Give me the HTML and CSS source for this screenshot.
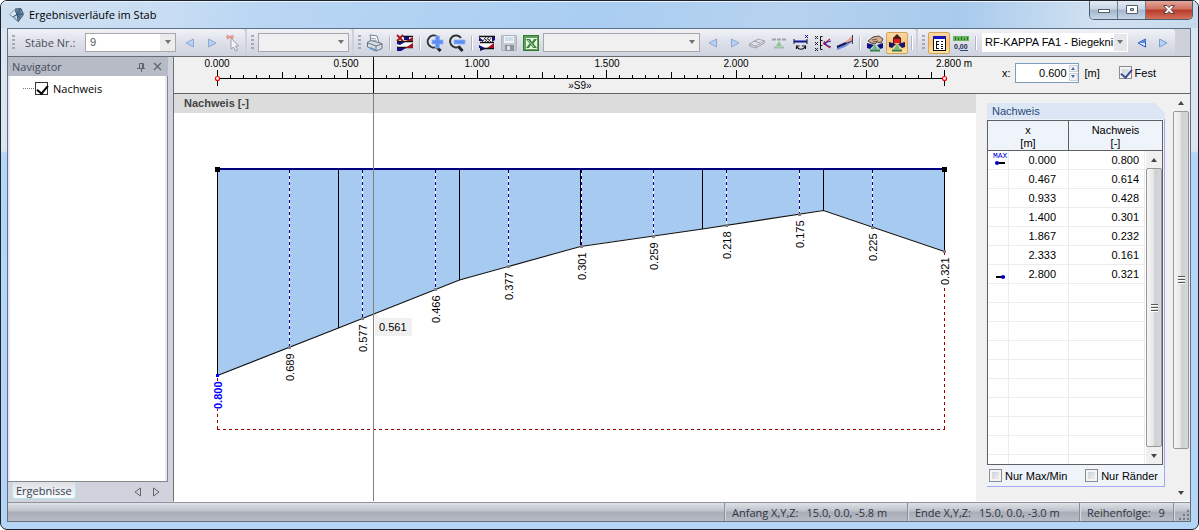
FILE: index.html
```html
<!DOCTYPE html>
<html lang="de">
<head>
<meta charset="utf-8">
<title>Ergebnisverläufe im Stab</title>
<link rel="stylesheet" href="styles.css">
</head>
<body>
<div class="window">
  <header class="titlebar">
    <svg class="app-icon" width="16" height="16" viewBox="0 0 16 16"><path d="M0 7.500L6 2l6-.5 2.500 6L9 15z" fill="#7f99b3"/><path d="M6.500 2.500L11 2l2 5-3 6-2-6z" fill="#5c7c9b"/><path d="M1 7.500L6 3l1.500 4L4.500 9.500zM5.500 10L8 8l1 5z" fill="#dce8f2"/><path d="M6 2l6-.5 2.500 6L9 15M6 3l2 4.500L9 14M8 7.500l6-.5M8 7.500L11.500 2M4.500 9.500L8 7.500l3 4" fill="none" stroke="#34506c" stroke-width=".9"/></svg>
    <h1 class="title">Ergebnisverläufe im Stab</h1>
    <div class="window-buttons">
      <button class="win-btn" aria-label="Minimieren"><svg width="14" height="12" viewBox="0 0 14 12"><rect x="1.500" y="5.500" width="11" height="3" fill="#fff" stroke="#555e6c"/></svg></button>
      <button class="win-btn" aria-label="Maximieren"><svg width="14" height="12" viewBox="0 0 14 12"><path d="M1.500 1.500h11v8h-11zM5.500 4.500v2h3v-2z" fill="#fff" fill-rule="evenodd" stroke="#555e6c"/></svg></button>
      <button class="win-btn close" aria-label="Schließen"><svg width="14" height="12" viewBox="0 0 14 12"><path d="M1.500 1.500H5L7 3.500l2-2h3.500L9 5.500l3.500 4H9l-2-2-2 2H1.500l3.500-4z" fill="#fff" stroke="#5a4044"/></svg></button>
    </div>
  </header>

  <div class="client">
    <div class="toolbar">
      <div class="tool-group">
        <span class="grip"></span>
        <label class="tool-label" for="staebe">Stäbe Nr.:</label>
        <span class="combo members"><select id="staebe"><option>9</option></select></span>
        <button class="tool" aria-label="Vorheriger Stab"><svg width="18" height="18" viewBox="0 0 18 18"><path d="M12.500 5v8L5 9z" fill="#b9d0f2" stroke="#8aaad8"/></svg></button>
        <button class="tool" aria-label="Nächster Stab"><svg width="18" height="18" viewBox="0 0 18 18"><path d="M5.500 5v8L13 9z" fill="#b9d0f2" stroke="#8aaad8"/></svg></button>
        <button class="tool" aria-label="Stab wählen"><svg width="18" height="18" viewBox="0 0 18 18"><path d="M6 4v11l2.500-2 2 4 2-1-2-4h3z" fill="#f3f4f6" stroke="#9a9ea8"/><path d="M2 1l6 4M8 1L2 5M1 3h8" stroke="#e09a8c" stroke-width="1.500"/></svg></button>
      </div>
      <div class="tool-group">
        <span class="grip"></span>
        <span class="combo empty"><select aria-label="Ergebnisgruppe"><option></option></select></span>
      </div>
      <div class="tool-group">
        <span class="grip"></span>
        <button class="tool" aria-label="Drucken"><svg width="18" height="18" viewBox="0 0 18 18"><path d="M4 1l7 1 2 7-8-1z" fill="#fff" stroke="#777e89"/><path d="M1.500 8L5 6.500l11 3v5L10 17l-8.500-4z" fill="#d8dce3" stroke="#6c737f"/><path d="M2 9l8 3 6-2M10 12v5" fill="none" stroke="#6c737f"/><path d="M4 14l5 2" stroke="#5f9bd0" stroke-width="2"/><path d="M5 4l5 1M6 6l5 1" stroke="#8ba6c4"/></svg></button>
        <span class="sep"></span>
        <button class="tool" aria-label="Verläufe löschen"><svg width="18" height="18" viewBox="0 0 18 18"><path d="M7 2h10v6H1V7zM2 8h14v5H2z" fill="#fff"/><path d="M7 2.500h10M1 7.500h16M1 13.500h16" stroke="#111" stroke-width="1.300"/><path d="M17 3v4h-7z" fill="#a01020"/><path d="M1 8h8l-5 3-3-1z" fill="#101080"/><path d="M17 9v5h-8z" fill="#a01020"/><path d="M1 14h9l-5 3H1z" fill="#101080"/><path d="M8 3h5v3H8z" fill="#101080"/><path d="M1 1l6 6M7 1L1 7" stroke="#a81010" stroke-width="1.800"/></svg></button>
        <span class="sep"></span>
        <button class="tool" aria-label="Vergrößern"><svg width="18" height="18" viewBox="0 0 18 18"><path d="M10 12l4.500 5" stroke="#222" stroke-width="3"/><path d="M11 2.500A6 6 0 1 0 11 12.500" fill="#dfe8f4" stroke="#333" stroke-width="2"/><path d="M9.500 2h4v4H17v4h-3.500v4h-4v-4H6V6h3.500z" fill="#5f8ef0" stroke="#8fb0f5" stroke-width=".8"/></svg></button>
        <button class="tool" aria-label="Verkleinern"><svg width="18" height="18" viewBox="0 0 18 18"><path d="M10 12l4.500 5" stroke="#222" stroke-width="3"/><path d="M13 4A6 6 0 1 0 12 12" fill="#dfe8f4" stroke="#333" stroke-width="2"/><path d="M6 6h11v4H6z" fill="#5f8ef0" stroke="#8fb0f5" stroke-width=".8"/></svg></button>
        <span class="sep"></span>
        <button class="tool" aria-label="Bereiche"><svg width="18" height="18" viewBox="0 0 18 18"><path d="M2 2h14v12H2z" fill="#fff"/><path d="M1 2.500h16M2 8.500h14M2 14.500h14" stroke="#111" stroke-width="1.300"/><path d="M1 3l5 4H1zM17 3v3l-3 2V3z" fill="#101080"/><path d="M4 8l4-5M7 8l4-5M10 8l3-4M6 4l4 4M9 4l4 4" stroke="#444"/><path d="M16 9v5h-7z" fill="#a01020"/><path d="M1 11l6 3H1zM7 15l-5 2v-2z" fill="#101080"/></svg></button>
        <button class="tool" aria-label="Speichern"><svg width="18" height="18" viewBox="0 0 18 18"><rect x="1.500" y="1.500" width="15" height="15" rx="1" fill="#c3c8d1" stroke="#adb3bd"/><path d="M4 2h10v7H4z" fill="#f0f4f8"/><path d="M5 4h8M5 6h8" stroke="#aec6e0"/><path d="M5 11h9v6H5z" fill="#8d939d"/><path d="M7 12h3v4H7z" fill="#dfe3e9"/></svg></button>
        <button class="tool" aria-label="Excel-Export"><svg width="18" height="18" viewBox="0 0 18 18"><rect x="1.500" y="1.500" width="15" height="15" fill="#5da256" stroke="#2f7a2d"/><path d="M4 4h11v11H4z" fill="#eef6ea"/><path d="M4 5h4l2 3 2-3h3l-3.500 4.500L15 14h-4l-2-3-2 3H4l3.500-4.500z" fill="#3a8442"/><path d="M6 6l6 7" stroke="#b9dcb0"/></svg></button>
        <span class="combo wide"><select aria-label="Diagramm"><option></option></select></span>
        <button class="tool" aria-label="Zurück"><svg width="18" height="18" viewBox="0 0 18 18"><path d="M12.500 5v8L5 9z" fill="#b9d0f2" stroke="#8aaad8"/></svg></button>
        <button class="tool" aria-label="Weiter"><svg width="18" height="18" viewBox="0 0 18 18"><path d="M5.500 5v8L13 9z" fill="#b9d0f2" stroke="#8aaad8"/></svg></button>
        <button class="tool" aria-label="Löschen"><svg width="18" height="18" viewBox="0 0 18 18"><path d="M1.500 10L10 5l6.500 2L8 12z" fill="#e2e3e6" stroke="#a2a5ab"/><path d="M1.500 10v2L8 14l8.500-5V7M8 12v2M6 7l6 2" fill="none" stroke="#a2a5ab"/></svg></button>
        <button class="tool" aria-label="Lager"><svg width="18" height="18" viewBox="0 0 18 18"><path d="M2 5.500h14" stroke="#a0a3a8" stroke-width="2" stroke-dasharray="4 1"/><path d="M9 7l3 5H6z" fill="#8cc49a"/><path d="M4 13.500h10" stroke="#9fc0a6" stroke-width="2"/></svg></button>
        <button class="tool" aria-label="Glättung"><svg width="18" height="18" viewBox="0 0 18 18"><path d="M2 5v5M15 5v5" stroke="#111"/><path d="M2 7.500h13" stroke="#14148c" stroke-width="2"/><path d="M13 1l3 3M16 1l-3 3" stroke="#1414a0"/><path d="M5 13c2 3 6 3 8 0M4.500 15v-3h3M10 12h3.500v3" fill="none" stroke="#111" stroke-width="1.200"/></svg></button>
        <button class="tool" aria-label="Werte"><svg width="18" height="18" viewBox="0 0 18 18"><path d="M1 2l3 3M4 2L1 5M1 8l3 3M4 8l-3 3M1 14l3 3M4 14l-3 3" stroke="#222"/><path d="M8.500 2.500h-2v13h2M6.500 6.500h2M6.500 11.500h2" fill="none" stroke="#111"/><path d="M9 9h2l5-4M9 9l7 5" fill="none" stroke="#d02020" stroke-width="1.200"/><path d="M10 11c2-3 4-3 7-4M10 7c2 4 4 5 7 6" fill="none" stroke="#1414c0"/></svg></button>
        <button class="tool" aria-label="Verlauf"><svg width="18" height="18" viewBox="0 0 18 18"><path d="M9 8l7-6v6l-7 2z" fill="#e9a79b"/><path d="M1 12l8-3 7-1-7 5-8 3z" fill="#6c86e0"/><path d="M1 13l15-6M16.500 1v9" stroke="#3c3c55"/><path d="M1 13l9-4" stroke="#161f55" stroke-width="2"/></svg></button>
        <span class="sep"></span>
        <button class="tool" aria-label="Lager anzeigen"><svg width="18" height="18" viewBox="0 0 18 18"><path d="M1 9l7 2-4 4-3-1zM17 9l-6 2 3 4 3-1z" fill="#12127a"/><path d="M2 7l5-4 6-1 4 3-2 4-4-1-2 2-4-1z" fill="#d1ae91" stroke="#55453d"/><path d="M6 6l5-1M7 8l5-1" stroke="#6e5649"/><path d="M9 10l3 5H6z" fill="#5fc080"/><path d="M4 16.500h10" stroke="#317d4a" stroke-width="2"/></svg></button>
        <button class="tool active" aria-label="Auflager"><svg width="18" height="18" viewBox="0 0 18 18"><path d="M1 8l7 2-4 4-3-1zM17 8l-7 2 4 4 3-1z" fill="#14146a"/><path d="M6 4h6v5H6z" fill="#e0201c"/><path d="M9 0l4 4v6h-1V5H6v5H5V4z" fill="#4c1d18"/><path d="M9 10l3 5H6z" fill="#5fc080"/><path d="M4 16.500h10" stroke="#317d4a" stroke-width="2"/></svg></button>
        <span class="sep"></span>
      </div>
      <div class="tool-group">
        <span class="grip"></span>
        <button class="tool active" aria-label="Navigator"><svg width="18" height="18" viewBox="0 0 18 18"><rect x="3.500" y="2.500" width="12" height="14" fill="#fff" stroke="#111"/><path d="M3 2h13v3H3z" fill="#1515b8"/><path d="M6.500 7v8M6 7.500h3M6 10.500h3M6 14.500h3M11 7.500h2M11 10.500h2M11 12.500h2M11 14.500h2" stroke="#111"/></svg></button>
        <button class="tool" aria-label="Wertetabelle"><svg width="18" height="18" viewBox="0 0 18 18"><path d="M1 2h16v5H1z" fill="#67b45b"/><path d="M3.500 3v3M6.500 4v2M9.500 3v3M12.500 4v2M15.500 3v3" stroke="#226e2b"/><text class="icon-digits" x="2" y="15">0,00</text><path d="M8 16.500h8" stroke="#2e4585"/></svg></button>
        <span class="sep"></span>
        <span class="combo case"><select aria-label="Bemessungsfall"><option>RF-KAPPA FA1 - Biegekni</option></select></span>
        <button class="tool" aria-label="Vorheriger Fall"><svg width="18" height="18" viewBox="0 0 18 18"><path d="M12.500 5v8L5 9z" fill="#dce9fb" stroke="#2c58c4"/><path d="M12.500 5v4H5z" fill="#5c88dc"/></svg></button>
        <button class="tool" aria-label="Nächster Fall"><svg width="18" height="18" viewBox="0 0 18 18"><path d="M4.500 5v8L12 9z" fill="#b9d0f2" stroke="#7a9fd8"/></svg></button>
      </div>
    </div>

    <div class="workspace">
      <aside class="navigator">
        <div class="nav-header">
          <span class="nav-title">Navigator</span>
          <button class="plain" aria-label="Anheften"><svg width="10" height="10" viewBox="0 0 10 10"><path d="M3.500 6V1.500h4V6M1 6.500h8M5.500 7v3M6.500 2v4" fill="none" stroke="#5e6571"/></svg></button>
          <button class="plain" aria-label="Navigator schließen"><svg width="10" height="10" viewBox="0 0 10 10"><path d="M1 1l7 7M8 1L1 8" stroke="#5e6571" stroke-width="1.300"/></svg></button>
        </div>
        <div class="tree">
          <label class="tree-item"><span class="branch"></span><input class="check tree-check" type="checkbox" checked>Nachweis</label>
        </div>
        <div class="nav-tabs">
          <button class="nav-tab">Ergebnisse</button>
          <button class="plain" aria-label="Nach links"><svg width="8" height="10" viewBox="0 0 8 10"><path d="M6.500 1v8L1 5z" fill="none" stroke="#666"/></svg></button>
          <button class="plain" aria-label="Nach rechts"><svg width="8" height="10" viewBox="0 0 8 10"><path d="M1.500 1v8L7 5z" fill="none" stroke="#666"/></svg></button>
        </div>
      </aside>

      <main class="main">
        <div class="ruler">
          <svg class="ruler-scale" viewBox="0 0 802 36" preserveAspectRatio="xMinYMin meet" shape-rendering="crispEdges">
            <path d="M43 21.500h727" stroke="#000"/>
            <path d="M56.500 18v3M69.500 18v3M82.500 18v3M95.500 18v3M121.500 18v3M134.500 18v3M147.500 18v3M160.500 18v3M186.500 18v3M199.500 18v3M212.500 18v3M225.500 18v3M251.500 18v3M264.500 18v3M277.500 18v3M290.500 18v3M316.500 18v3M329.500 18v3M342.500 18v3M355.500 18v3M380.500 18v3M393.500 18v3M406.500 18v3M419.500 18v3M445.500 18v3M458.500 18v3M471.500 18v3M484.500 18v3M510.500 18v3M523.500 18v3M536.500 18v3M549.500 18v3M575.500 18v3M588.500 18v3M601.500 18v3M614.500 18v3M640.500 18v3M653.500 18v3M666.500 18v3M679.500 18v3M705.500 18v3M718.500 18v3M731.500 18v3M744.500 18v3" stroke="#000"/>
            <path d="M108.500 15v6M238.500 15v6M368.500 15v6M497.500 15v6M627.500 15v6M757.500 15v6" stroke="#000"/>
            <path d="M173.500 13v8M303.500 13v8M432.500 13v8M562.500 13v8M692.500 13v8M43.500 13v16M770.500 13v16M199.500 0v36" stroke="#000"/>
            <g fill="#fff" stroke="#f00" stroke-width="1.200" shape-rendering="auto"><circle cx="43.500" cy="21.500" r="2"/><circle cx="770.500" cy="21.500" r="2"/></g>
            <g class="scale-text" text-anchor="middle">
              <text x="43" y="10">0.000</text><text x="172" y="10">0.500</text><text x="303" y="10">1.000</text><text x="433" y="10">1.500</text><text x="562" y="10">2.000</text><text x="692" y="10">2.500</text><text x="780" y="10">2.800 m</text><text x="406" y="32">»S9»</text>
            </g>
          </svg>
        </div>
        <form class="position">
          <label for="pos-x">x:</label>
          <span class="spin"><input id="pos-x" type="text" value="0.600"><span class="spin-arrows"><button type="button" aria-label="Erhöhen"><i class="tri up"></i></button><button type="button" aria-label="Verringern"><i class="tri down"></i></button></span></span>
          <span class="unit">[m]</span>
          <label class="fixed"><input class="check" type="checkbox" checked>Fest</label>
        </form>

        <section class="diagram">
          <h2 class="diagram-title">Nachweis [-]</h2>
          <svg class="plot" viewBox="174 113 802 387" preserveAspectRatio="xMinYMin meet">
            <path d="M217.500 169V376L338.500 328L459.500 280L580.500 246L702.500 229L823.500 210L944.500 251V169z" fill="#a6caf0"/>
            <g fill="none" shape-rendering="crispEdges">
              <path d="M289.500 170v177M362.500 170v148M435.500 170v119M508.500 170v96M581.500 170v76M653.500 170v66M726.500 170v55M799.500 170v44M872.500 170v57" stroke="#fff"/>
              <path d="M289.500 170v177M362.500 170v148M435.500 170v119M508.500 170v96M581.500 170v76M653.500 170v66M726.500 170v55M799.500 170v44M872.500 170v57" stroke="#00007f" stroke-dasharray="3 3"/>
              <path d="M217.500 169v207M338.500 169v159M459.500 169v111M580.500 169v77M702.500 169v60M823.500 169v41M944.500 169v82" stroke="#000"/>
              <path d="M217.500 378v52" stroke="#a00000" stroke-dasharray="3 3"/>
              <path d="M217 429.500h728M944.500 429V253" stroke="#a00000" stroke-dasharray="3 3"/>
              <path d="M217 169h728" stroke="#00007f" stroke-width="2"/>
            </g>
            <path d="M217.500 375.500L338.500 328L459.500 280L580.500 246.500L702.500 229L823.500 210.500L944.500 251.500" fill="none" stroke="#111" stroke-width="1.100"/>
            <g shape-rendering="crispEdges">
              <path d="M215 167h5v5h-5zM942 167h5v5h-5z"/>
              <path d="M288 346h3v3h-3zM361 317h3v3h-3zM434 288h3v3h-3zM507 265h3v3h-3zM580 245h3v3h-3zM652 235h3v3h-3zM725 224h3v3h-3zM798 213h3v3h-3zM871 226h3v3h-3zM943 250h3v3h-3z" fill="#808080"/>
              <path d="M216 374h3v3h-3z" fill="#00f"/>
              <path d="M213 381h10v28h-10zM940 258h10v27h-10z" fill="#fff"/>
              <path d="M373.500 113v388" stroke="#808080"/>
              <path d="M375 318h37v18h-37zM375 314l4 4h-4z" fill="#f0f0f0"/>
            </g>
            <g class="plot-text">
              <text class="max" transform="translate(222 409) rotate(-90)">0.800</text>
              <text transform="translate(294 381) rotate(-90)">0.689</text>
              <text transform="translate(367 352) rotate(-90)">0.577</text>
              <text transform="translate(440 323) rotate(-90)">0.466</text>
              <text transform="translate(513 300) rotate(-90)">0.377</text>
              <text transform="translate(586 280) rotate(-90)">0.301</text>
              <text transform="translate(658 270) rotate(-90)">0.259</text>
              <text transform="translate(731 259) rotate(-90)">0.218</text>
              <text transform="translate(804 248) rotate(-90)">0.175</text>
              <text transform="translate(877 261) rotate(-90)">0.225</text>
              <text transform="translate(949 285) rotate(-90)">0.321</text>
              <text x="379" y="331">0.561</text>
            </g>
          </svg>
        </section>

        <aside class="side">
          <section class="panel">
            <h2 class="panel-title">Nachweis</h2>
            <div class="panel-body">
              <div class="grid-frame">
                <table class="values">
                  <colgroup><col class="c-mark"><col class="c-x"><col class="c-val"><col class="c-bar"></colgroup>
                  <thead><tr><th colspan="2">x<br>[m]</th><th colspan="2">Nachweis<br>[-]</th></tr></thead>
                  <tbody>
                    <tr><td><svg class="mark" width="16" height="17" viewBox="0 0 16 17"><text class="max-mark" x="0" y="6">MAX</text><path d="M3 11h9" stroke="#000" stroke-width="2"/><circle cx="4" cy="11" r="2" fill="#0000d0"/></svg></td><td>0.000</td><td>0.800</td><td></td></tr>
                    <tr><td></td><td>0.467</td><td>0.614</td><td></td></tr>
                    <tr><td></td><td>0.933</td><td>0.428</td><td></td></tr>
                    <tr><td></td><td>1.400</td><td>0.301</td><td></td></tr>
                    <tr><td></td><td>1.867</td><td>0.232</td><td></td></tr>
                    <tr><td></td><td>2.333</td><td>0.161</td><td></td></tr>
                    <tr><td><svg class="mark" width="16" height="17" viewBox="0 0 16 17"><path d="M3 11h9" stroke="#000" stroke-width="2"/><circle cx="10" cy="11" r="2" fill="#0000d0"/></svg></td><td>2.800</td><td>0.321</td><td></td></tr>
                    <tr><td></td><td></td><td></td><td></td></tr>
                    <tr><td></td><td></td><td></td><td></td></tr>
                    <tr><td></td><td></td><td></td><td></td></tr>
                    <tr><td></td><td></td><td></td><td></td></tr>
                    <tr><td></td><td></td><td></td><td></td></tr>
                    <tr><td></td><td></td><td></td><td></td></tr>
                    <tr><td></td><td></td><td></td><td></td></tr>
                    <tr><td></td><td></td><td></td><td></td></tr>
                    <tr><td></td><td></td><td></td><td></td></tr>
                    <tr><td></td><td></td><td></td><td></td></tr>
                  </tbody>
                </table>
                <div class="scrollbar inner"><button aria-label="Nach oben"><i class="tri up"></i></button><div class="thumb"><i></i><i></i><i></i></div><button aria-label="Nach unten"><i class="tri down"></i></button></div>
              </div>
              <div class="filters">
                <label><input class="check" type="checkbox">Nur Max/Min</label>
                <label><input class="check" type="checkbox">Nur Ränder</label>
              </div>
            </div>
          </section>
          <div class="scrollbar outer"><button aria-label="Nach oben"><i class="tri up"></i></button><div class="thumb"><i></i><i></i><i></i></div><div class="track"></div><button aria-label="Nach unten"><i class="tri down"></i></button></div>
        </aside>
      </main>
    </div>

    <footer class="status">
      <div class="cell start"><span>Anfang X,Y,Z:</span><span>15.0, 0.0, -5.8 m</span></div>
      <div class="cell end"><span>Ende X,Y,Z:</span><span>15.0, 0.0, -3.0 m</span></div>
      <div class="cell order"><span>Reihenfolge:</span><span>9</span></div>
      <div class="cell size-grip"><svg width="12" height="12" viewBox="0 0 12 12"><path d="M9 1h2v2H9zM5 5h2v2H5zM9 5h2v2H9zM1 9h2v2H1zM5 9h2v2H5zM9 9h2v2H9z" fill="#757b85"/></svg></div>
    </footer>
  </div>
</div>
</body>
</html>
```
FILE: styles.css
```css
* { box-sizing: border-box; }

body {
  margin: 0;
  background: #fff;
  color: #000;
  font-family: "Open Sans", "Noto Sans", sans-serif;
  font-size: 11px;
}

button {
  margin: 0;
  padding: 0;
  border: 0;
  background: none;
  color: inherit;
  font: inherit;
}

h1, h2 { margin: 0; font-weight: normal; }

/* Window frame */
.window {
  display: flex;
  flex-direction: column;
  height: 100vh;
  min-height: 500px;
  padding: 0 7px 7px 6px;
  border: 1px solid #1c232d;
  border-radius: 7px;
  background: linear-gradient(#d9e6f3 28px, #dbe5ee 150px, #b3d6f9 152px, #b5d5f5);
  overflow: hidden;
}

.titlebar {
  display: flex;
  align-items: flex-start;
  flex: none;
  height: 27px;
  margin: 0 -7px 0 -6px;
  padding: 0 5px 0 8px;
  background: linear-gradient(100deg, #cfe0f1, #c8ddf3 14%, #b9d6f3 22%, #a9cdf1 50%, #b6d2ef 65%, #a8caec 80%, #d3e2f1 92%, #c6d9ec);
  box-shadow: inset 0 1px #eaf4fe;
}

.app-icon { margin-top: 6px; }

.title {
  flex: 1;
  margin-left: 4px;
  font-size: 11px;
  line-height: 28px;
}

.window-buttons {
  display: flex;
  border: 1px solid #4e5c70;
  border-top: 0;
  border-radius: 0 0 5px 5px;
  overflow: hidden;
}

.win-btn {
  display: flex;
  align-items: center;
  justify-content: center;
  width: 28px;
  height: 18px;
  border-right: 1px solid #6a7c92;
  background: linear-gradient(#e3ebf4, #c7d4e3 45%, #a4b6ca 50%, #c5d6e8);
}

.win-btn.close {
  width: 46px;
  border-right: 0;
  background: linear-gradient(#e3a69b, #cf7160 45%, #b53a28 50%, #d4705a);
}

.client {
  display: flex;
  flex-direction: column;
  flex: 1;
  min-height: 0;
  border: 1px solid #66717f;
  border-top-color: #5b6f87;
  background: #d0d3dd;
}

/* Toolbar */
.toolbar {
  display: flex;
  flex: none;
  gap: 2px;
  height: 28px;
  border-bottom: 1px solid #686b71;
  background: #ced1d9;
}

.tool-group {
  display: flex;
  align-items: center;
  flex: none;
  padding-left: 4px;
  border-radius: 0 3px 3px 0;
  background: linear-gradient(#f0f2f7, #dde0e9 50%, #cfd3de);
}

.grip {
  flex: none;
  width: 3px;
  height: 15px;
  margin-right: 3px;
  background: repeating-linear-gradient(#a5aab5 0 2px, transparent 2px 4px);
}

.tool-label { width: 60px; margin-left: 7px; color: #4a4e58; }

.combo {
  position: relative;
  flex: none;
  height: 19px;
  border: 1px solid #a6a8ae;
  background: #f0f0f0;
}

.combo::after {
  content: "";
  position: absolute;
  top: 6px;
  right: 4px;
  border: 3px solid transparent;
  border-top: 4px solid #6f7277;
  border-bottom: 0;
  pointer-events: none;
}

.combo select {
  width: 100%;
  height: 100%;
  padding: 0 14px 0 4px;
  border: 0;
  appearance: none;
  background: transparent;
  color: #000;
  font: 11px/17px "Liberation Sans", Arial, sans-serif;
}

.members { width: 91px; margin-right: 3px; background: linear-gradient(90deg, #fff 74px, #ececec 74px); }
.members select { color: #555; }
.empty { width: 91px; margin: 0 3px 0 1px; }
.wide { width: 157px; margin: 0 2px 0 1px; }
.case { width: 146px; margin: 0 3px 0 2px; border-color: #fff; background: linear-gradient(90deg, #fff 131px, #e5e7eb 131px); }
.case select { padding-left: 2px; }

.tool {
  display: flex;
  align-items: center;
  justify-content: center;
  flex: none;
  width: 22px;
  height: 22px;
}

.tool.active {
  border: 1px solid #d3a35a;
  border-radius: 2px;
  background: linear-gradient(#fbd9a5, #fac07a 50%, #fde3a0);
}

.sep {
  flex: none;
  width: 8px;
  height: 14px;
  background: linear-gradient(90deg, transparent 3px, #b2b6c0 3px 4px, #fff 4px 5px, transparent 5px);
}

.icon-digits { fill: #222a50; font: bold 7px "Liberation Sans", Arial, sans-serif; }

/* Navigator */
.workspace { display: flex; flex: 1; min-height: 0; }

.navigator {
  display: flex;
  flex-direction: column;
  flex: none;
  width: 160px;
}

.nav-header {
  display: flex;
  align-items: center;
  gap: 7px;
  height: 19px;
  padding: 0 5px 0 4px;
  background: #b6bbc6;
  color: #444c5a;
}

.nav-title { flex: 1; }
.plain { display: flex; }

.tree {
  flex: 1;
  padding: 2px 0 0 15px;
  border: 1px solid #83858b;
  border-width: 0 1px 1px 0;
  background: #fff;
  box-shadow: inset 2px 0 #e6e9f5, inset -2px 0 #e6e9f5;
}

.tree-item { display: flex; align-items: center; height: 20px; }
.branch { width: 11px; margin-right: 1px; border-top: 1px dotted #777; }

.check {
  position: relative;
  flex: none;
  width: 13px;
  height: 13px;
  margin: 0 3px 0 0;
  border: 1px solid #8b8d91;
  appearance: none;
  background: linear-gradient(135deg, #c8ccd4, #f4f4f4);
  box-shadow: inset 0 0 0 2px #f4f4f4;
}

.check:checked::after {
  content: "";
  position: absolute;
  top: 0;
  left: 3px;
  width: 5px;
  height: 9px;
  border: solid #3a4c93;
  border-width: 0 2px 2px 0;
  transform: rotate(40deg);
}

.tree-check { margin-right: 5px; border-color: #333; background: #fff; box-shadow: none; }
.tree-check:checked::after { border-color: #000; }

.nav-tabs {
  display: flex;
  align-items: center;
  gap: 10px;
  height: 20px;
  padding-right: 8px;
}

.nav-tab {
  align-self: flex-start;
  height: 17px;
  margin: 0 auto 0 4px;
  padding: 0 3px;
  border: 1px solid #b8e6e6;
  border-top: 0;
  border-radius: 0 0 3px 3px;
  background: linear-gradient(#dedfe6, #f8fafb);
  color: #3b4352;
}

/* Results area */
.main {
  display: grid;
  grid-template-columns: 1fr 214px;
  grid-template-rows: 37px 1fr;
  flex: 1;
  min-width: 0;
  margin-left: 5px;
  border-left: 1px solid #6d6f73;
  border-bottom: 1px solid #fff;
  background: #f0f0f0;
  font-family: "Liberation Sans", Arial, sans-serif;
}

.ruler, .position { border-bottom: 1px solid #646464; }
.ruler-scale { display: block; width: 100%; height: 36px; }
.scale-text { font-size: 10px; }

.position { display: flex; align-items: center; padding: 0 0 5px 26px; }

.spin {
  display: flex;
  width: 64px;
  height: 20px;
  margin: 0 6px 0 4px;
  border: 1px solid #7f9db9;
  background: #fff;
}

.spin input {
  flex: 1;
  min-width: 0;
  padding: 0 2px 0 0;
  border: 0;
  background: none;
  font: inherit;
  text-align: right;
}

.spin-arrows { display: grid; gap: 1px; width: 9px; padding: 1px 0; }
.spin-arrows button { display: flex; align-items: center; justify-content: center; border: 1px solid #cdd2da; background: #eff1f4; }

.tri { border: 3px solid transparent; }
.tri.up { border-top: 0; border-bottom: 4px solid #444; }
.tri.down { border-bottom: 0; border-top: 4px solid #444; }
.spin .tri { border-right-width: 2px; border-left-width: 2px; }
.spin .up { border-bottom: 3px solid #4a6fa5; }
.spin .down { border-top: 3px solid #4a6fa5; }

.unit { width: 34px; }
.fixed { display: flex; align-items: center; }

.diagram { display: flex; flex-direction: column; min-width: 0; min-height: 0; background: #fff; }

.diagram-title {
  flex: none;
  height: 19px;
  padding-left: 10px;
  background: linear-gradient(90deg, transparent 199px, #808080 199px 200px, transparent 200px) #dcdcdc;
  color: #444;
  font-size: 11px;
  font-weight: bold;
  line-height: 19px;
}

.plot { display: block; flex: 1; width: 100%; min-height: 0; }
.plot-text { font-size: 11px; }
.plot-text .max { fill: #00f; font-weight: bold; }

/* Value panel */
.side { display: flex; min-height: 0; }

.panel {
  display: flex;
  flex-direction: column;
  flex: 1;
  min-width: 0;
  margin: 9px 8px 14px 11px;
}

.panel-title {
  flex: none;
  height: 16px;
  padding-left: 5px;
  background: #dce6f4;
  clip-path: polygon(0 0, calc(100% - 10px) 0, 100% 10px, 100% 100%, 0 100%);
  color: #2a4a7c;
  font-size: 11px;
  line-height: 16px;
}

.panel-body {
  display: flex;
  flex-direction: column;
  flex: 1;
  min-height: 0;
  padding: 1px 1px 0 0;
  border: 1px solid #a6a6f2;
  border-width: 0 1px 1px 0;
  background: #eff4fb;
}

.grid-frame {
  position: relative;
  flex: 1;
  min-height: 0;
  border: 1px solid #5e6064;
  background: #fff;
  overflow: hidden;
}

.values { width: 100%; border-collapse: separate; border-spacing: 0; table-layout: fixed; }
.c-mark { width: 21px; }
.c-x { width: 60px; }
.c-bar { width: 17px; }

.values th {
  height: 30px;
  padding: 2px 0 0;
  border-bottom: 1px solid #5e6064;
  background: #eff4fb;
  font-weight: normal;
  line-height: 13px;
}

.values th:first-child { border-right: 1px solid #5e6064; }

.values td {
  height: 19px;
  padding: 0 12px 0 0;
  border: 1px solid #ececec;
  border-width: 0 1px 1px 0;
  text-align: right;
}

.values td:nth-child(3) { padding-right: 5px; }
.values td:first-child { padding: 0 0 0 5px; text-align: left; }
.mark { display: block; overflow: visible; }
.max-mark { fill: #0000e0; font: 8px "Liberation Mono", monospace; }

.scrollbar { display: flex; flex-direction: column; width: 16px; background: #f0f0f0; }
.scrollbar button { display: flex; flex: none; align-items: center; justify-content: center; height: 17px; }

.thumb {
  display: flex;
  flex-direction: column;
  align-items: center;
  justify-content: center;
  flex: 1;
  gap: 1px;
  border: 1px solid #979797;
  border-radius: 2px;
  background: linear-gradient(90deg, #f5f5f5, #e7e7e9 45%, #cfd0d4 55%, #d6d7da);
}

.thumb i { width: 7px; height: 2px; border-top: 1px solid #555; background: #fff; }

.inner { position: absolute; top: 30px; right: 0; bottom: 0; }
.outer { margin-right: 1px; }
.track { flex: none; height: 35px; }

.filters {
  display: flex;
  justify-content: space-between;
  flex: none;
  height: 21px;
  padding: 0 5px 0 2px;
}

.filters label { display: flex; align-items: center; }

/* Status bar */
.status {
  display: flex;
  justify-content: flex-end;
  flex: none;
  height: 19px;
  border-top: 1px solid #8d929b;
  background: linear-gradient(#dfe2e7, #bcc1ca 45%, #a8adb7 50%, #b7bcc5);
  color: #30343c;
}

.cell {
  display: flex;
  align-items: center;
  gap: 8px;
  padding-left: 7px;
  border-left: 1px solid #8a8f99;
  box-shadow: inset 1px 0 #d6d9de;
  white-space: nowrap;
}

.start { width: 183px; }
.end { width: 172px; }
.order { width: 94px; }
.size-grip { width: 17px; padding: 5px 0 0 4px; }
```
